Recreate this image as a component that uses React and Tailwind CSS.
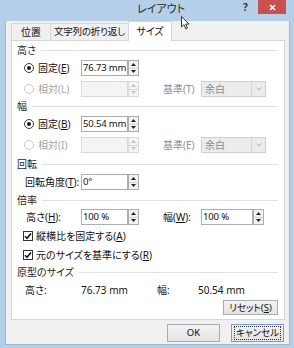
import React from "react";

function U({ children }) {
  return <span className="underline underline-offset-[1px]">{children}</span>;
}

function Radio({ checked, disabled }) {
  return (
    <span
      className={
        "flex h-[10px] w-[10px] shrink-0 items-center justify-center rounded-full border bg-white " +
        (disabled ? "border-[#c8c8c8] bg-[#f4f4f4]" : "border-[#3c3c3c]")
      }
    >
      {checked && <span className="h-[4px] w-[4px] rounded-full bg-[#1a1a1a]" />}
    </span>
  );
}

function Check() {
  return (
    <span className="flex h-[10px] w-[10px] shrink-0 items-center justify-center border border-[#333] bg-white">
      <svg width="8" height="8" viewBox="0 0 8 8">
        <path d="M1 4.2 L3 6.2 L7 1.5" fill="none" stroke="#111" strokeWidth="1.6" />
      </svg>
    </span>
  );
}

function Spinner({ disabled }) {
  const c = disabled ? "#c4c4c4" : "#222";
  return (
    <div
      className={
        "flex w-[11px] shrink-0 flex-col border " +
        (disabled ? "border-[#dadada] bg-[#f4f4f4]" : "border-[#acacac] bg-[#f2f2f2]")
      }
    >
      <div className="flex flex-1 items-center justify-center border-b border-[#d4d4d4]">
        <svg width="5" height="3" viewBox="0 0 5 3">
          <path d="M0 3 L2.5 0 L5 3 Z" fill={c} />
        </svg>
      </div>
      <div className="flex flex-1 items-center justify-center">
        <svg width="5" height="3" viewBox="0 0 5 3">
          <path d="M0 0 L2.5 3 L5 0 Z" fill={c} />
        </svg>
      </div>
    </div>
  );
}

function SpinBox({ value, disabled, width = "w-[58px]" }) {
  return (
    <div className={"flex h-[16px] shrink-0 " + width}>
      <div
        className={
          "flex min-w-0 flex-1 items-center overflow-hidden whitespace-nowrap border pl-[1px] text-[9.5px] leading-none tracking-[-0.15px] " +
          (disabled ? "border-[#d9d9d9] bg-[#f4f4f4]" : "border-[#abadb3] bg-white text-[#111]")
        }
      >
        {value}
      </div>
      <Spinner disabled={disabled} />
    </div>
  );
}

function Select() {
  return (
    <div className="flex h-[16px] w-[65px] shrink-0 border border-[#cfcfcf] bg-[#ececec]">
      <div className="flex flex-1 items-center pl-[3px] text-[10px] leading-none text-[#8c8c8c]">余白</div>
      <div className="flex w-[14px] items-center justify-center border-l border-[#d6d6d6]">
        <svg width="6" height="4" viewBox="0 0 6 4">
          <path d="M0.5 0.5 L3 3 L5.5 0.5" fill="none" stroke="#b0b0b0" strokeWidth="1" />
        </svg>
      </div>
    </div>
  );
}

function Heading({ children, className = "" }) {
  return (
    <div className={"flex h-[12px] items-center pl-[5px] pr-[6px] " + className}>
      <span className="leading-none text-[#1e1e1e]">{children}</span>
      <span className="ml-[5px] h-px flex-1 bg-[#e0e0e0]" />
    </div>
  );
}

function Button({ children, focused, className = "" }) {
  return (
    <div
      className={
        "flex shrink-0 items-center justify-center whitespace-nowrap border bg-gradient-to-b from-[#f2f2f2] to-[#e3e3e3] text-[9.5px] leading-none text-[#111] " +
        (focused ? "border-[#6f9fd6] " : "border-[#acacac] ") +
        className
      }
    >
      {focused ? (
        <div className="flex h-[14px] w-[47px] items-center justify-center border border-dotted border-[#333]">
          {children}
        </div>
      ) : (
        children
      )}
    </div>
  );
}

export default function App() {
  return (
    <div className="relative h-[348px] w-[294px] overflow-hidden bg-[#b5cfe8] font-['Noto_Sans','Noto_Sans_CJK_JP',sans-serif] text-[10px] text-[#111] [font-feature-settings:'palt']">
      {/* Title bar */}
      <div className="flex h-[19px] items-start">
        <div className="ml-[137px] mt-[2px] w-[106px] whitespace-nowrap text-[11px] leading-[13px] text-[#2b2b2b]">
          レイアウト
        </div>
        <div className="mt-[1px] w-[15px] text-[10px] font-bold leading-[12px] text-[#333]">?</div>
        <div className="flex h-[14px] w-[28px] items-center justify-center bg-[#c75050]">
          <svg width="7" height="7" viewBox="0 0 7 7">
            <path d="M1 1 L6 6 M6 1 L1 6" stroke="#fff" strokeWidth="1.5" />
          </svg>
        </div>
      </div>

      {/* Client area */}
      <div className="ml-[5px] h-[324px] w-[285px] border-x border-b border-[#9fb8d2] bg-[#f0f0f0] pl-[5px]">
        {/* Tabs */}
        <div className="mt-[2px] flex h-[19px] items-end whitespace-nowrap">
          <div className="flex h-[17px] w-[39px] items-center justify-center border-l border-t border-[#d6d6d6] bg-[#f0f0f0] leading-none">
            位置
          </div>
          <div className="flex h-[17px] w-[78px] items-center justify-center border-l border-t border-[#d6d6d6] bg-[#f0f0f0] text-[9.5px] leading-none tracking-[-0.2px]">
            文字列の折り返し
          </div>
          <div className="relative z-10 -mb-px flex h-[20px] w-[44px] items-center justify-center border-x border-t border-[#d6d6d6] bg-white pb-[2px] leading-none">
            サイズ
          </div>
        </div>

        {/* Panel */}
        <div className="flex h-[280px] w-[274px] flex-col whitespace-nowrap border border-[#d6d6d6] bg-white">
          <Heading className="mt-[3px]">高さ</Heading>
          <div className="mt-[4px] flex h-[16px] items-center pl-[12px]">
            <div className="flex w-[57px] items-center gap-[4px] leading-none">
              <Radio checked />
              <span>固定(<U>E</U>)</span>
            </div>
            <SpinBox value="76.73 mm" />
          </div>
          <div className="mt-[5px] flex h-[16px] items-center pl-[12px]">
            <div className="flex w-[57px] items-center gap-[4px] leading-none text-[#a3a3a3]">
              <Radio disabled />
              <span>相対(L)</span>
            </div>
            <SpinBox value="" disabled />
            <div className="ml-[24px] w-[38px] leading-none text-[#8f8f8f]">基準(T)</div>
            <Select />
          </div>

          <Heading className="mt-[3px]">幅</Heading>
          <div className="mt-[4px] flex h-[16px] items-center pl-[12px]">
            <div className="flex w-[57px] items-center gap-[4px] leading-none">
              <Radio checked />
              <span>固定(<U>B</U>)</span>
            </div>
            <SpinBox value="50.54 mm" />
          </div>
          <div className="mt-[5px] flex h-[16px] items-center pl-[12px]">
            <div className="flex w-[57px] items-center gap-[4px] leading-none text-[#a3a3a3]">
              <Radio disabled />
              <span>相対(I)</span>
            </div>
            <SpinBox value="" disabled />
            <div className="ml-[24px] w-[38px] leading-none text-[#8f8f8f]">基準(E)</div>
            <Select />
          </div>

          <Heading className="mt-[5px]">回転</Heading>
          <div className="mt-[4px] flex h-[16px] items-center pl-[13px]">
            <div className="w-[56px] leading-none">
              回転角度(<U>T</U>):
            </div>
            <SpinBox value="0°" />
          </div>

          <Heading className="mt-[4px]">倍率</Heading>
          <div className="mt-[3px] flex h-[16px] items-center pl-[14px]">
            <div className="w-[55px] leading-none">
              高さ(<U>H</U>):
            </div>
            <SpinBox value="100 %" />
            <div className="ml-[24px] w-[38px] leading-none">
              幅(<U>W</U>):
            </div>
            <SpinBox value="100 %" width="w-[63px]" />
          </div>
          <div className="mt-[5px] flex h-[12px] items-center gap-[3px] pl-[11px] leading-none">
            <Check />
            <span>縦横比を固定する(<U>A</U>)</span>
          </div>
          <div className="mt-[7px] flex h-[12px] items-center gap-[3px] pl-[11px] leading-none">
            <Check />
            <span>元のサイズを基準にする(<U>R</U>)</span>
          </div>

          <Heading className="mt-[5px]">原型のサイズ</Heading>
          <div className="mt-[6px] flex h-[12px] items-center pl-[13px] leading-none">
            <div className="w-[56px]">高さ:</div>
            <div className="w-[76px]">76.73 mm</div>
            <div className="w-[41px]">幅:</div>
            <div>50.54 mm</div>
          </div>
          <div className="mt-[4px] flex justify-end pr-[6px]">
            <Button className="h-[15px] w-[55px]">
              <span>
                リセット(<U>S</U>)
              </span>
            </Button>
          </div>
        </div>

        {/* Bottom buttons */}
        <div className="mt-[4px] flex justify-end gap-[11px] pr-[5px]">
          <Button className="h-[18px] w-[53px]">OK</Button>
          <Button focused className="h-[18px] w-[53px]">
            キャンセル
          </Button>
        </div>
      </div>

      {/* Mouse cursor */}
      <svg className="absolute left-[181px] top-[16px]" width="10" height="14" viewBox="0 0 10 14">
        <path d="M0.5 0.5 L0.5 11 L3 8.6 L4.8 12.8 L6.4 12.1 L4.7 8.1 L8 8.1 Z" fill="#fff" stroke="#222" strokeWidth="0.9" strokeLinejoin="round" />
      </svg>
    </div>
  );
}
